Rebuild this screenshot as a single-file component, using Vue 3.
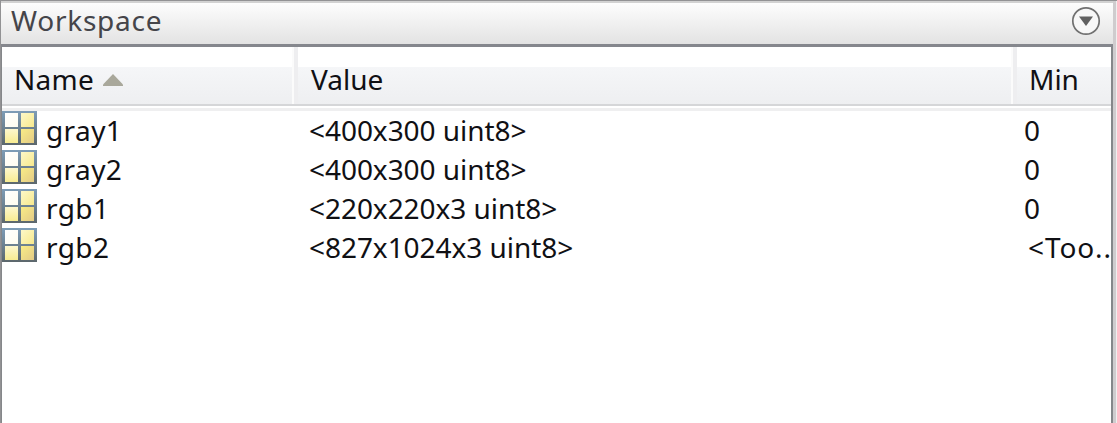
<script setup>
const rows = [
  { name: 'gray1', value: '<400x300 uint8>', min: '0' },
  { name: 'gray2', value: '<400x300 uint8>', min: '0' },
  { name: 'rgb1', value: '<220x220x3 uint8>', min: '0' },
  { name: 'rgb2', value: '<827x1024x3 uint8>', min: '<Too..', clipped: true },
]
</script>

<template>
  <div class="panel">
    <header class="title">
      <span class="title-text">Workspace</span>
      <svg class="menu" width="30" height="30" viewBox="0 0 30 30">
        <circle cx="15" cy="15" r="13.2" fill="#f7f7f7" stroke="#707070" stroke-width="1.7" />
        <path d="M8 10.5H22L15 20Z" fill="#606060" />
      </svg>
    </header>
    <div class="body">
      <div class="head">
        <div class="cell c-name"><span class="t-name">Name</span>
          <svg class="sort" width="20" height="12" viewBox="0 0 20 12"><path d="M10 0L20 10.5V12H0V10.5Z" fill="#a9a89b" /></svg>
        </div>
        <div class="cell c-value"><span class="t-value">Value</span></div>
        <div class="cell c-min"><span class="t-min">Min</span></div>
      </div>
      <div class="rule"></div>
      <div class="rows">
        <div v-for="r in rows" :key="r.name" class="row">
          <div class="name">
            <svg class="icon" width="35" height="34" viewBox="0 0 35 34">
              <defs>
                <linearGradient id="frame" x1="0" y1="0" x2="0" y2="1"><stop offset="0" stop-color="#7e9db7" /><stop offset="1" stop-color="#5c676c" /></linearGradient>
                <linearGradient id="pale" x1="0" y1="0" x2="1" y2="1"><stop offset="0" stop-color="#fff" /><stop offset="1" stop-color="#fffdf0" /></linearGradient>
                <linearGradient id="right" x1="0" y1="0" x2="1" y2="1"><stop offset="0" stop-color="#fdf8c8" /><stop offset="1" stop-color="#f7e98d" /></linearGradient>
                <linearGradient id="left" x1="0" y1="0" x2="0" y2="1"><stop offset="0" stop-color="#fdf7ce" /><stop offset="1" stop-color="#f8ec91" /></linearGradient>
                <linearGradient id="deep" x1="0" y1="0" x2="1" y2="1"><stop offset="0" stop-color="#f9ec86" /><stop offset="1" stop-color="#e3cb86" /></linearGradient>
              </defs>
              <rect width="35" height="34" fill="url(#frame)" />
              <rect x="3" y="2" width="13" height="14" fill="url(#pale)" />
              <rect x="19" y="2" width="13" height="14" fill="url(#right)" />
              <rect x="3" y="18" width="13" height="14" fill="url(#left)" />
              <rect x="19" y="18" width="13" height="14" fill="url(#deep)" />
            </svg>
            <span>{{ r.name }}</span>
          </div>
          <div class="value">{{ r.value }}</div>
          <div class="min" :class="{ clipped: r.clipped }">{{ r.min }}</div>
        </div>
      </div>
    </div>
  </div>
</template>

<style scoped>
.panel {
  box-sizing: border-box;
  width: 1117px;
  height: 423px;
  border-top: 1px solid #929294;
  border-left: 1px solid #929294;
  background: #fff;
  font-family: "Noto Sans", "Open Sans", sans-serif;
  font-size: 28px;
  line-height: 39px;
  color: #101014;
  white-space: nowrap;
  overflow: hidden;
  box-shadow: inset -1px 0 #f1efef, inset -4px 0 #cfccce;
}
.title {
  box-sizing: border-box;
  width: 1112px;
  height: 46px;
  display: flex;
  justify-content: space-between;
  padding: 0 12px 0 10px;
  border-top: 2px solid #d2d2d2;
  border-bottom: 3px solid #85878d;
  background: linear-gradient(#fdfdfd, #e3e3e3);
  color: #45454a;
}
.title-text { line-height: 35px; letter-spacing: 0.75px; }
.menu { margin-top: 3px; }
.body {
  box-sizing: border-box;
  width: 1112px;
  height: 376px;
  border-left: 1px solid #85878a;
  border-right: 2px solid #85878a;
}
.head {
  display: flex;
  height: 59px;
  box-sizing: border-box;
  border-bottom: 2px solid #d5d6d8;
  background: linear-gradient(#fff 0 20px, #f5f6f8 20px, #eeeff1);
}
.cell { box-sizing: border-box; display: flex; padding-top: 13px; border-right: 4px solid #eeeef0; box-shadow: inset -2px 0 #fbfbfb; }
.c-name { width: 296px; padding-left: 12px; }
.t-name { letter-spacing: 0.3px; }
.c-value { width: 719px; padding-left: 13px; }
.c-min { flex: 1; border: 0; padding-left: 12px; box-shadow: none; }
.sort { margin: 14px 0 0 9px; }
.rule { height: 3px; margin-top: 2px; background: #efeff0; }
.row { display: flex; height: 39px; }
.name { width: 307px; display: flex; }
.name span { margin-left: 9px; letter-spacing: 0.4px; }
.value { width: 715px; letter-spacing: -0.05px; }
.min { width: 87px; }
.clipped { padding-left: 4px; width: 83px; overflow: hidden; letter-spacing: 0.9px; }
</style>
